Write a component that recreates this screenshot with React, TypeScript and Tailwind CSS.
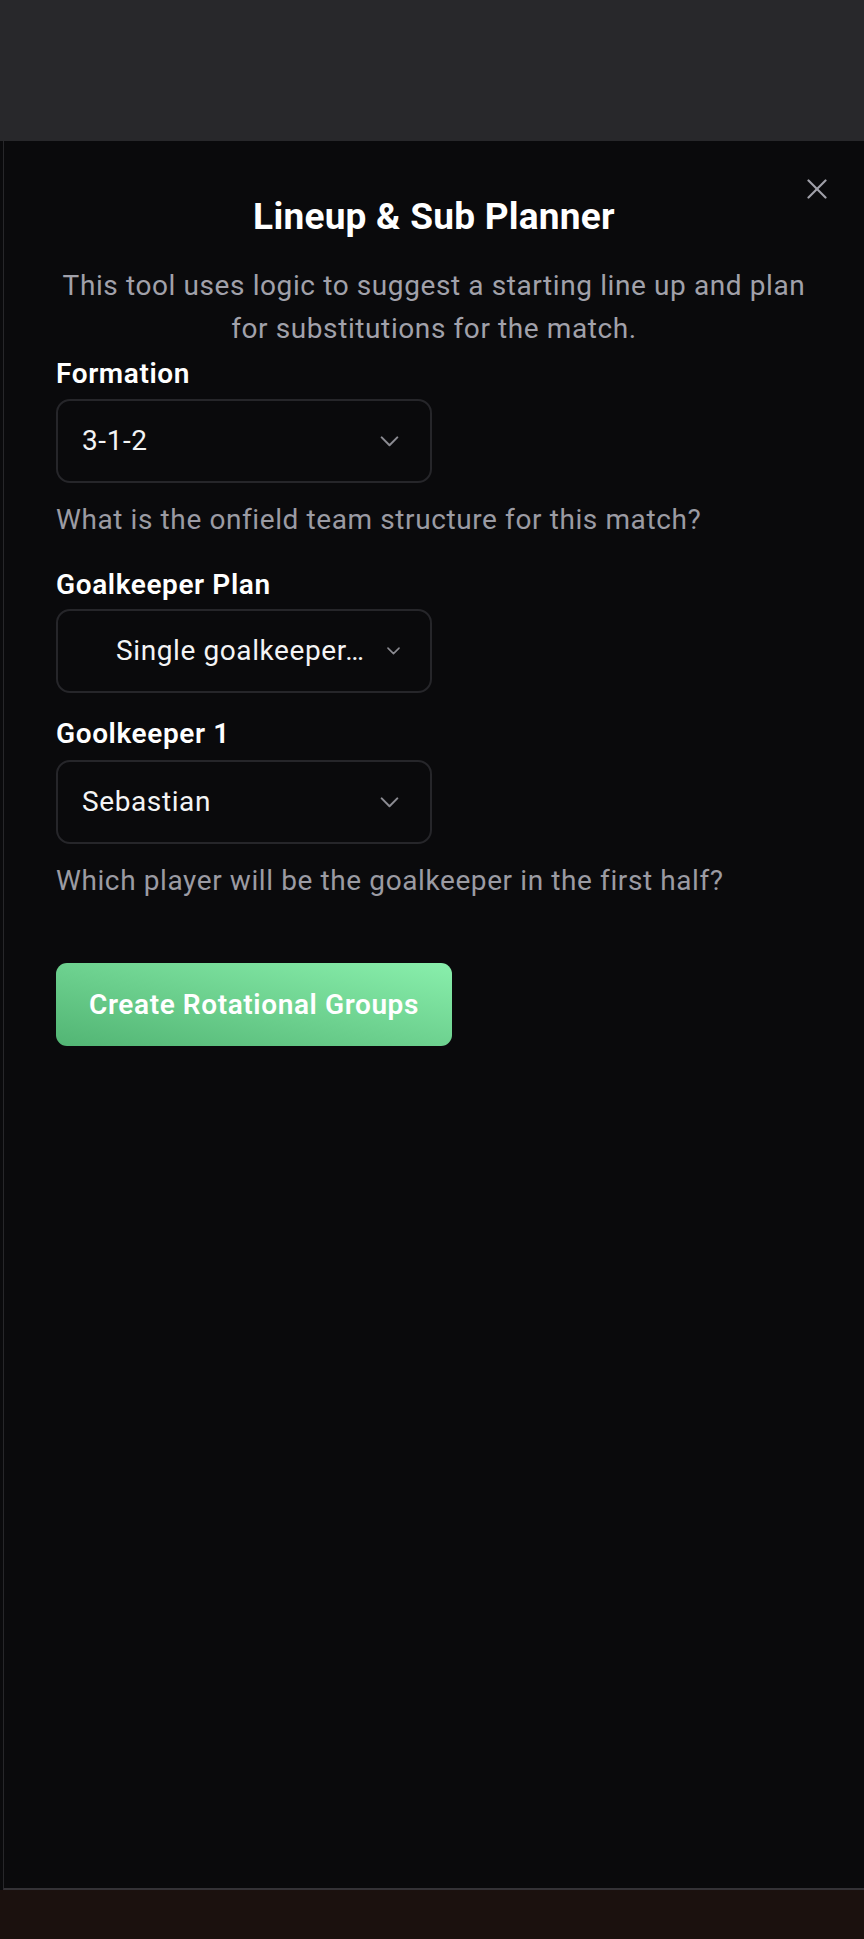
interface SelectBoxProps {
  value: string;
  compact?: boolean;
}

function Chevron({ small }: { small?: boolean }) {
  return (
    <svg
      viewBox="0 0 20 12"
      className={small ? "w-[13px] h-[8px]" : "w-[19px] h-[11px]"}
      fill="none"
      stroke="#8b8b92"
      strokeWidth={small ? 2.4 : 2.2}
      strokeLinecap="round"
      strokeLinejoin="round"
    >
      <polyline points="1.5,1.5 10,10 18.5,1.5" />
    </svg>
  );
}

function SelectBox({ value, compact }: SelectBoxProps) {
  return (
    <div
      className={
        "w-[376px] h-[84px] rounded-[14px] border-2 border-[#26262a] bg-[#0a0a0c] flex items-center justify-between text-[28px] tracking-[0.6px] text-[#f4f4f5] " +
        (compact ? "pl-[58px] pr-[30px]" : "pl-[24px] pr-[31px]")
      }
    >
      <span className="whitespace-nowrap">{value}</span>
      <Chevron small={compact} />
    </div>
  );
}

export default function App() {
  return (
    <div
      className="w-full h-[1939px] flex flex-col bg-[#0a0a0c]"
      style={{ fontFamily: "Roboto, 'Liberation Sans', sans-serif" }}
    >
      <div className="h-[141px] shrink-0 bg-[#28282b]" />

      <div className="flex-1 ml-[3px] border-l border-b-2 border-l-[#27272a] border-b-[#343236] bg-[#0a0a0c] relative px-[52px] pt-[54px]">
        <button className="absolute top-[38px] right-[37px]">
          <svg viewBox="0 0 20 20" className="w-[20px] h-[20px]" fill="none" stroke="#a1a1aa" strokeWidth={2.2} strokeLinecap="round">
            <line x1="1.5" y1="1.5" x2="18.5" y2="18.5" />
            <line x1="18.5" y1="1.5" x2="1.5" y2="18.5" />
          </svg>
        </button>

        <h1 className="text-center text-[37px] leading-[44px] tracking-[0.25px] font-bold text-white">
          Lineup &amp; Sub Planner
        </h1>

        <p className="mt-[25px] text-center text-[28px] leading-[43px] tracking-[0.6px] text-[#a1a1aa]">
          This tool uses logic to suggest a starting line up and plan for substitutions for the match.
        </p>

        <div className="mt-[3px] flex flex-col tracking-[0.6px]">
          <label className="text-[28px] leading-[42px] font-semibold text-white">Formation</label>
          <div className="mt-[4px]">
            <SelectBox value="3-1-2" />
          </div>
          <p className="mt-[16px] text-[28px] leading-[42px] text-[#9b9ba3]">
            What is the onfield team structure for this match?
          </p>

          <label className="mt-[23px] text-[28px] leading-[42px] font-semibold text-white">
            Goalkeeper Plan
          </label>
          <div className="mt-[3px]">
            <SelectBox value="Single goalkeeper…" compact />
          </div>

          <label className="mt-[20px] text-[28px] leading-[42px] font-semibold text-white">
            Goolkeeper 1
          </label>
          <div className="mt-[5px]">
            <SelectBox value="Sebastian" />
          </div>
          <p className="mt-[16px] text-[28px] leading-[42px] text-[#9b9ba3]">
            Which player will be the goalkeeper in the first half?
          </p>

          <div className="mt-[61px]">
            <button className="h-[83px] px-[33px] rounded-[11px] bg-linear-to-tr from-[#52b574] to-[#89efac] text-[28px] tracking-[0.6px] font-semibold text-white">
              Create Rotational Groups
            </button>
          </div>
        </div>
      </div>

      <div className="h-[49px] shrink-0 bg-[#1b110e]" />
    </div>
  );
}
